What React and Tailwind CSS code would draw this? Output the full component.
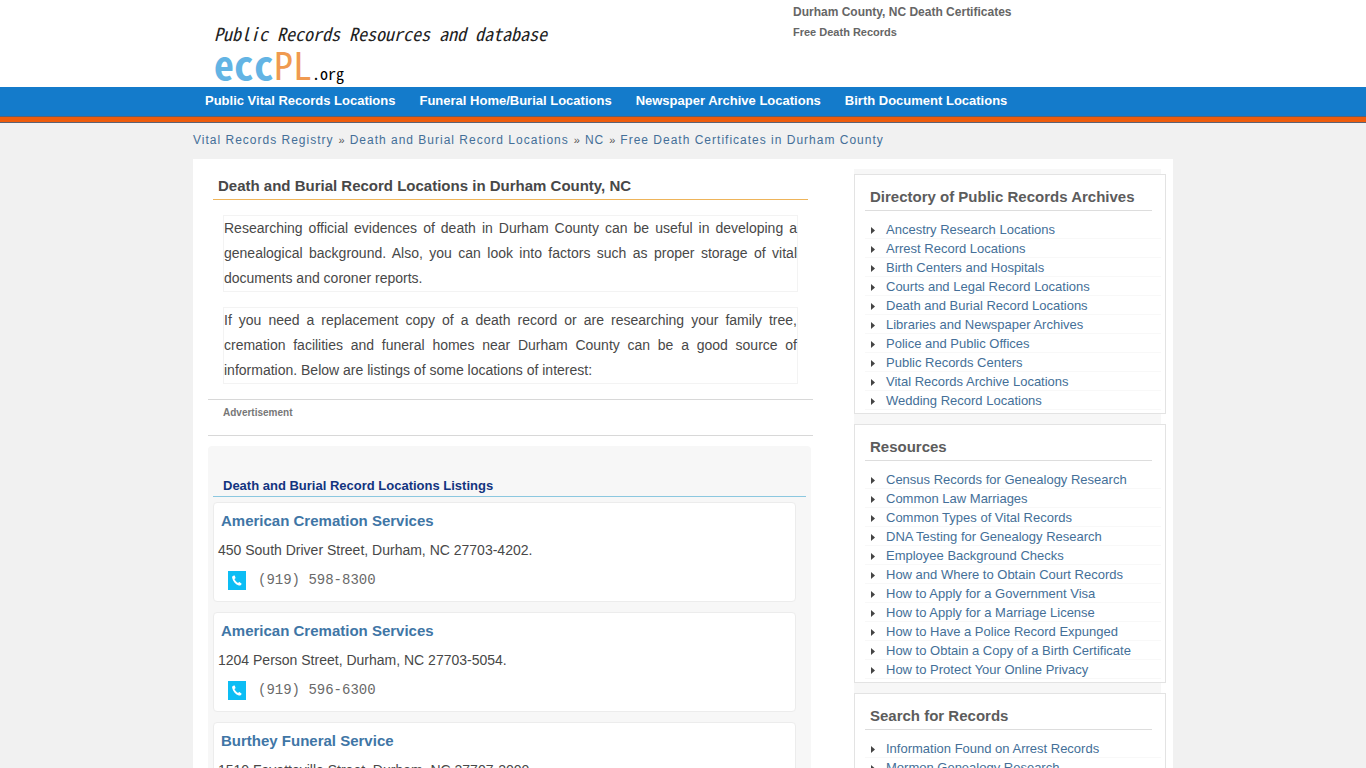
const navLinks = [
  'Public Vital Records Locations',
  'Funeral Home/Burial Locations',
  'Newspaper Archive Locations',
  'Birth Document Locations',
]

const breadcrumbs = [
  'Vital Records Registry',
  'Death and Burial Record Locations',
  'NC',
  'Free Death Certificates in Durham County',
]

const listings = [
  { name: 'American Cremation Services', address: '450 South Driver Street, Durham, NC 27703-4202.', phone: '(919) 598-8300' },
  { name: 'American Cremation Services', address: '1204 Person Street, Durham, NC 27703-5054.', phone: '(919) 596-6300' },
  { name: 'Burthey Funeral Service', address: '1510 Fayetteville Street, Durham, NC 27707-2000.', phone: '(919) 682-0327' },
]

const sections = [
  {
    title: 'Directory of Public Records Archives',
    links: [
      'Ancestry Research Locations',
      'Arrest Record Locations',
      'Birth Centers and Hospitals',
      'Courts and Legal Record Locations',
      'Death and Burial Record Locations',
      'Libraries and Newspaper Archives',
      'Police and Public Offices',
      'Public Records Centers',
      'Vital Records Archive Locations',
      'Wedding Record Locations',
    ],
  },
  {
    title: 'Resources',
    links: [
      'Census Records for Genealogy Research',
      'Common Law Marriages',
      'Common Types of Vital Records',
      'DNA Testing for Genealogy Research',
      'Employee Background Checks',
      'How and Where to Obtain Court Records',
      'How to Apply for a Government Visa',
      'How to Apply for a Marriage License',
      'How to Have a Police Record Expunged',
      'How to Obtain a Copy of a Birth Certificate',
      'How to Protect Your Online Privacy',
    ],
  },
  {
    title: 'Search for Records',
    links: ['Information Found on Arrest Records', 'Mormon Genealogy Research'],
  },
]

function Logo() {
  return (
    <a href="#" className="block pt-[22px] pl-[21px] font-['Noto_Sans_Mono_CJK_JP','Noto_Sans_CJK_JP',monospace] text-[#222]">
      <span className="block text-[18px] leading-[22px] italic whitespace-pre">
        Public Records Resources and database
      </span>
      <span className="flex items-baseline leading-[38px]">
        <span className="text-[40px] font-bold text-[#63b4e4]">ecc</span>
        <span className="text-[38px] text-[#f09a50]">PL</span>
        <span className="text-[16px] text-black">.org</span>
      </span>
    </a>
  )
}

function PhoneIcon() {
  return (
    <svg width="18" height="19" viewBox="0 0 18 19" aria-hidden="true">
      <rect width="18" height="19" fill="#0dbdf4" />
      <path
        d="M4.500 5.200 5.900 4.500c.4-.2.7-.1.9.3l.7 1.900c.1.4 0 .6-.3.800l-.8.500c.8 1.800 2 3.100 3.700 4l.7-.7c.3-.3.600-.3.900-.1l1.700 1.200c.3.2.3.500.1.8-.6 1-1.500 1.500-2.600 1.200C7.600 13.500 5 10.700 4.200 7c-.2-.7-.1-1.300.3-1.800Z"
        fill="#fff"
      />
    </svg>
  )
}

function Listing({ item }) {
  return (
    <li className="mb-[10px] rounded border border-[#ececec] bg-white pt-1 pb-[6px]">
      <h3 className="pl-[7px] text-[15px] leading-7 font-bold">
        <a href="#" className="text-[#3f76a6]">{item.name}</a>
      </h3>
      <p className="pl-1 text-sm leading-[30px] text-[#484848]">{item.address}</p>
      <p className="flex h-[30px] items-center gap-3 pl-[14px] font-['Liberation_Mono',monospace] text-sm text-[#6a6a6a]">
        <PhoneIcon />
        {item.phone}
      </p>
    </li>
  )
}

function SideSection({ section }) {
  return (
    <section className="mb-[10px] -mr-[5px] border border-[#e3e3e3] bg-white pb-[3px] pl-[10px]">
      <h2 className="mr-[13px] mb-[9px] border-b border-[#ddd] pt-[9px] pl-[5px] text-[15px] leading-[26px] font-bold text-[#5c5c5c]">
        {section.title}
      </h2>
      <ul className="mr-1">
        {section.links.map((link) => (
          <li key={link} className="flex h-[19px] items-center gap-[11px] border-b border-[#f8f8f8] pl-[6px]">
            <svg width="4" height="7" viewBox="0 0 4 7" className="mt-[2px]" aria-hidden="true">
              <path d="M0 0 4 3.500 0 7Z" fill="#444" />
            </svg>
            <a href="#" className="pt-[2px] text-[13px] leading-[18px] text-[#446f98]">{link}</a>
          </li>
        ))}
      </ul>
    </section>
  )
}

function App() {
  return (
    <div className="min-h-screen bg-[#f1f1f1] font-['Liberation_Sans',Arial,sans-serif] text-[#484848]">
      <header className="bg-white">
        <div className="mx-auto flex h-[87px] max-w-[980px]">
          <div className="w-[600px]">
            <Logo />
          </div>
          <div className="font-bold text-[#666]">
            <h1 className="pt-[2px] text-xs leading-5">Durham County, NC Death Certificates</h1>
            <p className="text-[11px] leading-5">Free Death Records</p>
          </div>
        </div>
        <nav className="bg-[#147bcb]">
          <ul className="mx-auto flex h-[29px] max-w-[980px] items-center gap-6 pl-3 text-[13px] leading-[15px] font-bold text-white">
            {navLinks.map((link) => (
              <li key={link} className="pb-[2px]">
                <a href="#">{link}</a>
              </li>
            ))}
          </ul>
          <div className="h-[7px] border-y border-[#5c6274] bg-[#ee5c0c]" />
        </nav>
      </header>

      <div className="mx-auto max-w-[980px]">
        <ul className="flex h-9 items-center gap-[5px] text-xs leading-5 tracking-[1px]">
          {breadcrumbs.map((crumb, i) => (
            <li key={crumb} className="flex gap-1 pb-[2px]">
              {i > 0 && <span className="text-[11px] text-[#555]">»</span>}
              <a href="#" className="text-[#446f98]">{crumb}</a>
            </li>
          ))}
        </ul>

        <div className="flex items-start justify-between bg-white pr-3 pb-8">
          <main className="w-[605px] ml-[15px]">
            <h2 className="mx-[5px] border-b border-b-[#eeb45a] pt-[14px] pl-[5px] text-[15px] leading-[26px] font-bold text-[#484848]">
              Death and Burial Record Locations in Durham County, NC
            </h2>
            <p className="mt-[15px] mr-[15px] ml-[15px] border border-[#f3f3f3] text-justify text-sm leading-[25px]">
              Researching official evidences of death in Durham County can be useful in developing a genealogical
              background. Also, you can look into factors such as proper storage of vital documents and coroner reports.
            </p>
            <p className="mt-[15px] mr-[15px] ml-[15px] border border-[#f3f3f3] text-justify text-sm leading-[25px]">
              If you need a replacement copy of a death record or are researching your family tree, cremation facilities
              and funeral homes near Durham County can be a good source of information. Below are listings of some
              locations of interest:
            </p>

            <div className="mt-[15px] h-[37px] border-y border-[#d8d8d8] pt-[3px] pl-[15px] text-[10px] leading-5 font-bold text-[#777]">
              Advertisement
            </div>

            <section className="mt-[10px] mr-[2px] rounded bg-[#f7f7f7] px-[5px] pt-[30px]">
              <h2 className="mb-[5px] border-b border-[#8cc8e0] pl-[10px] text-[13px] leading-5 font-bold text-[#12347f]">
                Death and Burial Record Locations Listings
              </h2>
              <ul className="mr-[10px]">
                {listings.map((item) => (
                  <Listing key={item.address} item={item} />
                ))}
              </ul>
            </section>
          </main>

          <aside className="mt-[10px] w-[307px] bg-[#f7f7f7] pt-[5px]">
            {sections.map((section) => (
              <SideSection key={section.title} section={section} />
            ))}
          </aside>
        </div>
      </div>
    </div>
  )
}

export default App
